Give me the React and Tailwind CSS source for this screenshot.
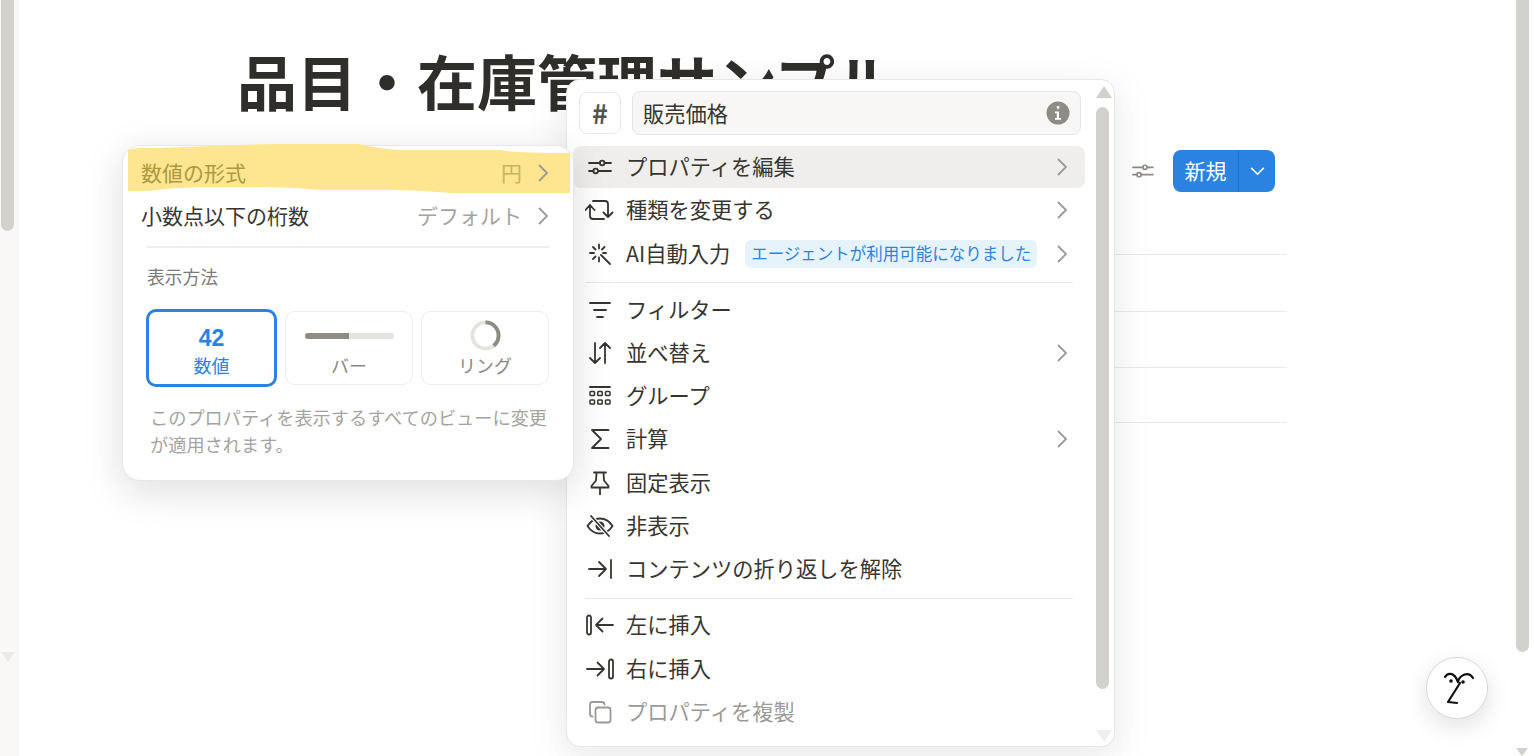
import React from 'react';

const FONT = "font-['Noto_Sans_CJK_JP','Noto_Sans',sans-serif]";

const Svg = ({ children, className = 'w-6 h-6 text-[#37352f]' }) => (
    <svg viewBox="0 0 24 24" fill="none" stroke="currentColor" strokeWidth="1.8" strokeLinecap="round" strokeLinejoin="round" className={className}>
        {children}
    </svg>
);

const Chevron = () => (
    <svg viewBox="0 0 12 20" fill="none" stroke="#9b9a97" strokeWidth="1.8" className="w-3 h-5 shrink-0">
        <path d="M2 2l8 8-8 8" />
    </svg>
);

const SlidersIcon = ({ className }) => (
    <Svg className={className}>
        <path d="M1 8h11M16.500 8H23M1 16h4.500M10 16h13" />
        <circle cx="14.200" cy="8" r="2.300" />
        <circle cx="7.700" cy="16" r="2.300" />
    </Svg>
);

const ICONS = {
    sliders: <SlidersIcon />,
    change: (
        <svg viewBox="0 0 30 24" fill="none" stroke="#37352f" strokeWidth="1.800" strokeLinecap="round" strokeLinejoin="round" className="w-[30px] h-6">
            <path d="M5 7v11a3 3 0 0 0 3 3h11M0.500 12L5 7l4.500 5M8 3h12a3 3 0 0 1 3 3v13M18.500 14.500L23 19l4.500-4.500" />
        </svg>
    ),
    wand: (
        <Svg>
            <path d="M13 13l9 9M11 2.500v4M11 15.500v4M2 11h4M15 11h3M5 5l2.500 2.500M16.500 5L14 7.500M5 17l2.500-2.500" />
        </Svg>
    ),
    filter: (
        <Svg>
            <path d="M2 5h20M6 12h12M9 19h6" />
        </Svg>
    ),
    sort: (
        <Svg>
            <path d="M7 2v20M2 17l5 5 5-5M17 22V2M12 7l5-5 5 5" />
        </Svg>
    ),
    group: (
        <Svg>
            <path d="M2 3h20" />
            <g strokeWidth="1.500">
                <rect x="2" y="7.500" width="4.500" height="4" rx="0.800" />
                <rect x="9.750" y="7.500" width="4.500" height="4" rx="0.800" />
                <rect x="17.500" y="7.500" width="4.500" height="4" rx="0.800" />
                <rect x="2" y="16" width="4.500" height="4" rx="0.800" />
                <rect x="9.750" y="16" width="4.500" height="4" rx="0.800" />
                <rect x="17.500" y="16" width="4.500" height="4" rx="0.800" />
            </g>
        </Svg>
    ),
    sigma: (
        <Svg>
            <path d="M20.500 3H4l9 9-9 9h16.500" />
        </Svg>
    ),
    pin: (
        <Svg>
            <path d="M6 1.500h12M8.500 1.500l-.5 8L3.500 15v1.500h17V15L16 9.500l-.5-8M12 16.500v7" />
        </Svg>
    ),
    eyeOff: (
        <svg viewBox="0 0 28 24" fill="none" stroke="#37352f" strokeWidth="1.800" strokeLinecap="round" className="w-7 h-6">
            <path d="M1.500 12C5 6.500 9 4.500 14 4.500S23 6.500 26.500 12C23 17.500 19 19.500 14 19.500S5 17.500 1.500 12z" />
            <circle cx="14" cy="12" r="4.500" fill="#37352f" stroke="none" />
            <path d="M5 2l18 20" stroke="#fff" strokeWidth="4" />
            <path d="M5 2l18 20" />
        </svg>
    ),
    unwrap: (
        <Svg>
            <path d="M1 12h17M11 5l7 7-7 7M23 3v18" />
        </Svg>
    ),
    insertLeft: (
        <svg viewBox="0 0 28 24" fill="none" stroke="#37352f" strokeWidth="1.800" strokeLinecap="round" strokeLinejoin="round" className="w-7 h-6">
            <rect x="1" y="2.500" width="4" height="19" rx="2" />
            <path d="M27 12H10M16.500 5.500L10 12l6.500 6.500" />
        </svg>
    ),
    insertRight: (
        <svg viewBox="0 0 28 24" fill="none" stroke="#37352f" strokeWidth="1.800" strokeLinecap="round" strokeLinejoin="round" className="w-7 h-6">
            <rect x="23" y="2.500" width="4" height="19" rx="2" />
            <path d="M1 12h17M11.500 5.500L18 12l-6.500 6.500" />
        </svg>
    ),
    copy: (
        <Svg className="w-6 h-6 text-[#9b9a97]">
            <rect x="7.500" y="7.500" width="15" height="15" rx="2.500" />
            <path d="M4.500 16.500A2.500 2.500 0 0 1 2 14V4.500A2.500 2.500 0 0 1 4.500 2H14a2.500 2.500 0 0 1 2.500 2.500" />
        </Svg>
    ),
};

const MenuRow = ({ icon, label, arrow, active, muted, children }) => (
    <div className={`flex items-center h-[42px] mb-[1.3px] pl-3 pr-[17px] rounded-lg ${active ? 'bg-[#efeeec]' : ''}`}>
        <div className="w-[30px] flex justify-center shrink-0">{ICONS[icon]}</div>
        <span className={`ml-[11px] pb-[2px] text-[21.25px] leading-[38px] ${muted ? 'text-[#9b9a97]' : 'text-[#37352f]'}`}>{label}</span>
        {children}
        {arrow && <div className="ml-auto"><Chevron /></div>}
    </div>
);

const PropertyMenu = () => (
    <div className="absolute left-[566px] top-[79px] w-[549px] h-[668px] bg-white rounded-[14px] border border-[#e8e7e4] shadow-[0_10px_40px_rgba(15,15,15,0.10)] flex z-10">
        <div className="w-[519px] shrink-0 pl-[6px] pr-[1px] pt-[11px]">
            <div className="flex items-center pl-[6px] pr-[4px] h-[44px] mb-[11px]">
                <div className="w-[42px] h-[42px] border border-[#e9e8e6] rounded-lg flex items-center justify-center text-[27px] font-semibold text-[#55534e]">#</div>
                <div className="ml-[11px] flex-1 h-[44px] bg-[#f8f7f5] border border-[#e6e5e2] rounded-lg flex items-center pl-[10px] pr-[10px] text-[21.25px] text-[#37352f]">
                    販売価格
                    <svg viewBox="0 0 24 24" className="w-6 h-6 ml-auto">
                        <circle cx="12" cy="12" r="11.500" fill="#8f8b85" />
                        <rect x="10.700" y="5" width="2.800" height="2.800" rx="1" fill="#fff" />
                        <path d="M9 10.500h4v6.500h2v1.800H9V17h1.800v-4.700H9z" fill="#fff" />
                    </svg>
                </div>
            </div>
            <MenuRow icon="sliders" label="プロパティを編集" arrow active />
            <MenuRow icon="change" label="種類を変更する" arrow />
            <MenuRow icon="wand" label="AI自動入力" arrow>
                <span className="ml-[15px] h-7 px-[6px] flex items-center rounded-md bg-[#e7f3fb] text-[#2b84de] text-[16.5px] whitespace-nowrap">エージェントが利用可能になりました</span>
            </MenuRow>
            <div className="h-px bg-[#e9e8e6] mx-3 mt-[7px] mb-[6px]" />
            <MenuRow icon="filter" label="フィルター" />
            <MenuRow icon="sort" label="並べ替え" arrow />
            <MenuRow icon="group" label="グループ" />
            <MenuRow icon="sigma" label="計算" arrow />
            <MenuRow icon="pin" label="固定表示" />
            <MenuRow icon="eyeOff" label="非表示" />
            <MenuRow icon="unwrap" label="コンテンツの折り返しを解除" />
            <div className="h-px bg-[#e9e8e6] mx-3 mt-[7.5px] mb-[5.5px]" />
            <MenuRow icon="insertLeft" label="左に挿入" />
            <MenuRow icon="insertRight" label="右に挿入" />
            <MenuRow icon="copy" label="プロパティを複製" muted />
        </div>
        <div className="relative flex-1">
            <div className="absolute left-[10px] top-[6px] w-0 h-0 border-x-[8px] border-x-transparent border-b-[12px] border-b-[#d3d1cb]" />
            <div className="absolute left-[10px] top-[27px] w-[13px] h-[582px] bg-[#d3d1cb] rounded-full" />
            <div className="absolute left-[10px] top-[650px] w-0 h-0 border-x-[8px] border-x-transparent border-t-[12px] border-t-[#f0efed]" />
        </div>
    </div>
);

const FormatRow = ({ label, value, highlighted }) => (
    <div className="flex items-center h-[43px] pl-[18px] pr-[24px]">
        <span className={`text-[21px] ${highlighted ? 'text-[#ad9842]' : 'text-[#37352f]'}`}>{label}</span>
        <span className={`ml-auto mr-[15px] text-[21px] ${highlighted ? 'text-[#c9b35c]' : 'text-[#a5a39f]'}`}>{value}</span>
        <Chevron />
    </div>
);

const DisplayCard = ({ label, selected, children }) => (
    <div className={`flex flex-col items-center rounded-[10px] ${selected ? 'w-[131px] h-[78px] border-[3px] border-[#2a83e0] text-[#2a83e0]' : 'w-[128px] h-[74px] border-[1.5px] border-[#efeeec] text-[#8a8884]'}`}>
        <div className="h-[48px] shrink-0 flex items-center justify-center">{children}</div>
        <span className="text-[18px] leading-[24px] -mt-[7px]">{label}</span>
    </div>
);

const NumberPopover = () => (
    <div className="absolute left-[122px] top-[145px] w-[452px] h-[336px] bg-white rounded-[18px] border border-[#e8e7e4] shadow-[0_10px_40px_rgba(15,15,15,0.14)] z-20">
        <svg viewBox="0 0 442 50" preserveAspectRatio="none" className="absolute left-[5px] -top-[2px] w-[442px] h-[50px]">
            <path d="M0 6 Q10 3 30 4 L112 1 Q170-1 232 0 Q250 5 272 6 L372 6 Q385 9 442 9 V49 L322 49 Q290 46 260 46 L192 46 Q160 43 132 43 L72 43 Q40 44 20 47 L0 47 Z" fill="#fde68f" />
        </svg>
        <div className="relative pt-[5px]">
            <FormatRow label="数値の形式" value="円" highlighted />
            <FormatRow label="小数点以下の桁数" value="デフォルト" />
        </div>
        <div className="h-[2px] bg-[#efeeec] mx-6 mt-[9px]" />
        <div className="pl-6 mt-[15px] text-[17.75px] leading-[26px] text-[#7d7a75]">表示方法</div>
        <div className="flex items-center gap-2 pl-[23px] pr-6 mt-[20px]">
            <DisplayCard label="数値" selected>
                <span className="text-[23px] font-bold font-['Liberation_Sans',sans-serif] leading-none pt-1">42</span>
            </DisplayCard>
            <DisplayCard label="バー">
                <div className="w-[89px] h-[6px] rounded-full bg-[#e4e3e0] overflow-hidden">
                    <div className="w-[44px] h-full bg-[#8f8b85]" />
                </div>
            </DisplayCard>
            <DisplayCard label="リング">
                <svg viewBox="0 0 32 32" className="w-[31px] h-[31px] mb-[2px] rotate-[-90deg]" fill="none" strokeWidth="4">
                    <circle cx="16" cy="16" r="13.500" stroke="#e4e3e0" />
                    <circle cx="16" cy="16" r="13.500" stroke="#8f8b85" strokeDasharray="33 85" />
                </svg>
            </DisplayCard>
        </div>
        <p className="pl-[27px] pr-5 mt-[17px] text-[18.2px] leading-[27px] text-[#a5a39f]">このプロパティを表示するすべてのビューに変更が適用されます。</p>
    </div>
);

const App = () => (
    <main className={`relative w-[1534px] h-[756px] overflow-hidden bg-white flex ${FONT}`}>
        <aside className="relative w-[19px] shrink-0 bg-[#f9f8f7]">
            <div className="w-[13px] ml-px h-[231px] bg-[#d3d1cb] rounded-b-full" />
            <div className="absolute left-[1px] top-[652px] w-0 h-0 border-x-[7px] border-x-transparent border-t-[10px] border-t-[#ebeae7]" />
        </aside>

        <section className="w-[1268px] shrink-0 pl-[218px]">
            <h1 className="mt-[36px] text-[60px] leading-[88px] font-bold text-[#2f2e2a] whitespace-nowrap">品目・在庫管理サンプル</h1>
            <div className="flex items-center justify-end h-[42px] mt-[26px] pr-3">
                <SlidersIcon className="w-[22px] h-[22px] text-[#8f8b85] mr-[19px]" />
                <div className="flex h-[42px] w-[102px] rounded-lg bg-[#2a83e0] text-white">
                    <span className="w-[66px] flex items-center justify-center text-[21px] border-r border-[#2273c6]">新規</span>
                    <div className="flex-1 flex items-center justify-center">
                        <svg viewBox="0 0 16 10" fill="none" stroke="#fff" strokeWidth="1.800" className="w-[15px] h-[9px]"><path d="M1 1l7 7 7-7" /></svg>
                    </div>
                </div>
            </div>
            <div className="mt-[62px]">
                <div className="h-[57px] border-t border-[#ebeae8]" />
                <div className="h-[56px] border-t border-[#ebeae8]" />
                <div className="h-[55px] border-t border-[#ebeae8]" />
                <div className="h-px border-t border-[#ebeae8]" />
            </div>
        </section>

        <div className="ml-auto relative w-[18px] shrink-0">
            <div className="w-[13px] h-[652px] bg-[#d3d1cb] rounded-b-full" />
            <div className="absolute left-0 top-[748px] w-0 h-0 border-x-[6.5px] border-x-transparent border-t-[8px] border-t-[#d3d1cb]" />
        </div>

        <NumberPopover />
        <PropertyMenu />

        <button className="absolute left-[1426px] top-[657px] w-[62px] h-[62px] rounded-full bg-white border border-[#d9d8d5] shadow-[0_8px_24px_rgba(15,15,15,0.12)] flex items-center justify-center z-10">
            <svg viewBox="0 0 40 40" fill="none" stroke="#111" strokeWidth="2.200" strokeLinecap="round" strokeLinejoin="round" className="w-10 h-10 shrink-0">
                <path d="M8 9c2-4 9-6 13 5" />
                <path d="M21 14c1-6 10-12 15-4" />
                <path d="M23 15L11 34l9 1" />
                <circle cx="14" cy="13" r="1.800" fill="#111" stroke="none" />
                <circle cx="26" cy="14" r="1.800" fill="#111" stroke="none" />
            </svg>
        </button>
    </main>
);

export default App;
